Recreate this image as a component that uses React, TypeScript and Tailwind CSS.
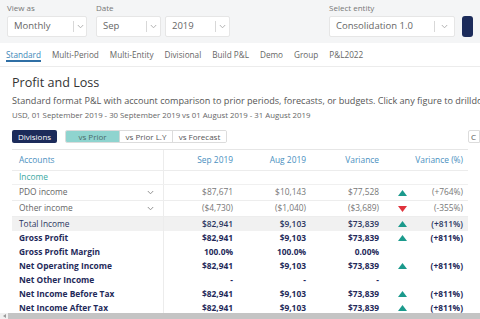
import React from "react";

const font = { fontFamily: '"Open Sans", "Liberation Sans", sans-serif' };

function Chevron({ className = "" }: { className?: string }) {
  return (
    <svg width="7" height="5" viewBox="0 0 7 5" className={className}>
      <path d="M0.8 1 L3.5 3.8 L6.2 1" fill="none" stroke="currentColor" strokeWidth="0.9" />
    </svg>
  );
}

function Select({ text, w, divider }: { text: string; w: string; divider: string }) {
  return (
    <div className={`${w} h-[21px] bg-white border border-[#e6e6e6] rounded-[2px] flex items-center`}>
      <span className="flex-1 pl-[6px] text-[9.5px] text-[#666]">{text}</span>
      <div className={`${divider} h-[11px] border-l border-[#d8d8d8] flex items-center justify-center text-[#aaa]`}>
        <Chevron />
      </div>
    </div>
  );
}

function Up() {
  return (
    <svg width="9" height="6" viewBox="0 0 9 6">
      <path d="M4.5 0 L9 6 L0 6 Z" fill="#1b9a8c" />
    </svg>
  );
}
function Down() {
  return (
    <svg width="9" height="6" viewBox="0 0 9 6">
      <path d="M0 0 L9 0 L4.5 6 Z" fill="#e0323c" />
    </svg>
  );
}

type Row = {
  name: string;
  sep: string;
  aug: string;
  v: string;
  tri?: "up" | "down";
  pct: string;
  kind: "plain" | "bold" | "total";
  chevron?: boolean;
  h: string;
};

const rows: Row[] = [
  { name: "PDO income", sep: "$87,671", aug: "$10,143", v: "$77,528", tri: "up", pct: "(+764%)", kind: "plain", chevron: true, h: "h-[16px]" },
  { name: "Other income", sep: "($4,730)", aug: "($1,040)", v: "($3,689)", tri: "down", pct: "(-355%)", kind: "plain", chevron: true, h: "h-[16px]" },
  { name: "Total Income", sep: "$82,941", aug: "$9,103", v: "$73,839", tri: "up", pct: "(+811%)", kind: "total", h: "h-[14px]" },
  { name: "Gross Profit", sep: "$82,941", aug: "$9,103", v: "$73,839", tri: "up", pct: "(+811%)", kind: "bold", h: "h-[14px]" },
  { name: "Gross Profit Margin", sep: "100.0%", aug: "100.0%", v: "0.00%", pct: "", kind: "bold", h: "h-[14px]" },
  { name: "Net Operating Income", sep: "$82,941", aug: "$9,103", v: "$73,839", tri: "up", pct: "(+811%)", kind: "bold", h: "h-[14px]" },
  { name: "Net Other Income", sep: "-", aug: "-", v: "-", pct: "", kind: "bold", h: "h-[14px]" },
  { name: "Net Income Before Tax", sep: "$82,941", aug: "$9,103", v: "$73,839", tri: "up", pct: "(+811%)", kind: "bold", h: "h-[14px]" },
  { name: "Net Income After Tax", sep: "$82,941", aug: "$9,103", v: "$73,839", tri: "up", pct: "(+811%)", kind: "bold", h: "h-[14px]" },
];

export default function App() {
  return (
    <div className="relative w-[480px] h-[319px] overflow-hidden bg-white" style={font}>
      {/* top band */}
      <div className="h-[43px] bg-[#f4f5f6] flex px-[7px] pt-[2px]">
        <div className="flex flex-col">
          <span className="text-[8px] leading-[11px] text-[#777]">View as</span>
          <div className="mt-[3px]">
            <Select text="Monthly" w="w-[80px]" divider="w-[13px]" />
          </div>
        </div>
        <div className="flex flex-col ml-[9px]">
          <span className="text-[8px] leading-[11px] text-[#777]">Date</span>
          <div className="mt-[3px] flex gap-[4px]">
            <Select text="Sep" w="w-[65px]" divider="w-[14px]" />
            <Select text="2019" w="w-[65px]" divider="w-[14px]" />
          </div>
        </div>
        <div className="flex flex-col ml-[99px]">
          <span className="text-[8px] leading-[11px] text-[#777]">Select entity</span>
          <div className="mt-[3px]">
            <Select text="Consolidation 1.0" w="w-[126px]" divider="w-[20px]" />
          </div>
        </div>
        <div className="ml-[7px] mt-[14px] w-[30px] h-[21px] bg-[#1c2b5a] rounded-[3px]" />
      </div>

      {/* tabs */}
      <div className="h-[24px] border-b border-[#ececec] flex items-start px-[6px] gap-[11px] text-[8.2px] text-[#666]">
        {["Standard", "Multi-Period", "Multi-Entity", "Divisional", "Build P&L", "Demo", "Group", "P&L2022"].map((t, i) => (
          <div key={t} className={`pt-[6px] h-[19px] ${i === 0 ? "text-[#3a86b8] border-b-[2px] border-[#2f6fa5]" : ""}`}>
            {t}
          </div>
        ))}
      </div>

      {/* content */}
      <div className="px-[12px]">
        <div className="pt-[7px] text-[12.6px] leading-[17px] text-[#333]">Profit and Loss</div>
        <div className="mt-[2px] text-[9.1px] leading-[15px] text-[#555] whitespace-nowrap">
          Standard format P&amp;L with account comparison to prior periods, forecasts, or budgets. Click any figure to drilldown
        </div>
        <div className="mt-[1px] text-[7.8px] leading-[12px] text-[#666] whitespace-nowrap">
          USD, 01 September 2019 - 30 September 2019 vs 01 August 2019 - 31 August 2019
        </div>
        <div className="mt-[9px] h-[13px] flex items-stretch text-[8px]">
          <div className="w-[45px] bg-[#1c2b5a] text-white rounded-[2px] flex items-center justify-center">Divisions</div>
          <div className="ml-[8px] flex border border-[#dcdcdc] rounded-[2px] overflow-hidden">
            <div className="w-[54px] bg-[#8fd4cf] text-[#4a6b6a] flex items-center justify-center border-r border-[#cfd8d8]">vs Prior</div>
            <div className="w-[53px] bg-white text-[#555] flex items-center justify-center border-r border-[#dcdcdc]">vs Prior L.Y</div>
            <div className="w-[53px] bg-white text-[#555] flex items-center justify-center">vs Forecast</div>
          </div>
          <div className="flex-1" />
          <div className="w-[12px] -mr-[12px] border border-[#dcdcdc] rounded-l-[2px] bg-white text-[#555] flex items-center pl-[2px]">C</div>
        </div>

        {/* table */}
        <div className="mt-[6px] border-t border-[#e6e6e6] text-[8.4px]">
          <div className="flex h-[21px] items-center border-b border-[#ececec] text-[#4a8fc0]">
            <div className="w-[152px] h-full flex items-center pl-[7px] border-r border-[#ececec]">Accounts</div>
            <div className="w-[73px] text-right pr-[4px]">Sep 2019</div>
            <div className="w-[73px] text-right pr-[4px]">Aug 2019</div>
            <div className="w-[73px] text-right pr-[4px]">Variance</div>
            <div className="w-[26px]" />
            <div className="w-[58px] text-right pr-[4px] whitespace-nowrap">Variance (%)</div>
          </div>
          <div className="flex h-[14px] items-center border-b border-[#f0f0f0] text-[#3aa9a3]">
            <div className="w-[152px] h-full flex items-center pl-[7px] border-r border-[#ececec]">Income</div>
          </div>
          {rows.map((r) => {
            const color =
              r.kind === "plain" ? "text-[#666]" : r.kind === "total" ? "text-[#2a3560]" : "text-[#1f2a5a] font-bold";
            const bg = r.kind === "total" ? "bg-[#f1f1f1]" : "";
            const border = r.kind === "plain" ? "border-b border-[#ededed]" : "";
            const num = r.kind === "plain" ? "text-[#777]" : r.kind === "total" ? "text-[#2a3560] font-semibold" : "";
            return (
              <div key={r.name} className={`flex ${r.h} items-center ${color} ${bg} ${border}`}>
                <div className="w-[152px] h-full flex items-center pl-[7px] pr-[9px] border-r border-[#ececec]">
                  <span className="flex-1 whitespace-nowrap">{r.name}</span>
                  {r.chevron && <Chevron className="text-[#888]" />}
                </div>
                <div className={`w-[73px] text-right pr-[4px] ${num}`}>{r.sep}</div>
                <div className={`w-[73px] text-right pr-[4px] ${num}`}>{r.aug}</div>
                <div className={`w-[73px] text-right pr-[4px] ${num}`}>{r.v}</div>
                <div className="w-[26px] flex justify-end pr-[2px]">
                  {r.tri === "up" && <Up />}
                  {r.tri === "down" && <Down />}
                </div>
                <div className={`w-[58px] text-right pr-[4px] whitespace-nowrap ${num}`}>{r.pct}</div>
              </div>
            );
          })}
        </div>
      </div>

      {/* horizontal scrollbar */}
      <div className="absolute left-0 right-0 bottom-0 h-[6px] bg-[#f0f0f0] flex items-center">
        <div className="w-[8px] flex justify-center text-[#999]">
          <svg width="3" height="4" viewBox="0 0 3 4"><path d="M3 0 L0 2 L3 4 Z" fill="currentColor" /></svg>
        </div>
        <div className="flex-1 h-[6px] bg-[#c4c4c4]" />
      </div>
    </div>
  );
}
